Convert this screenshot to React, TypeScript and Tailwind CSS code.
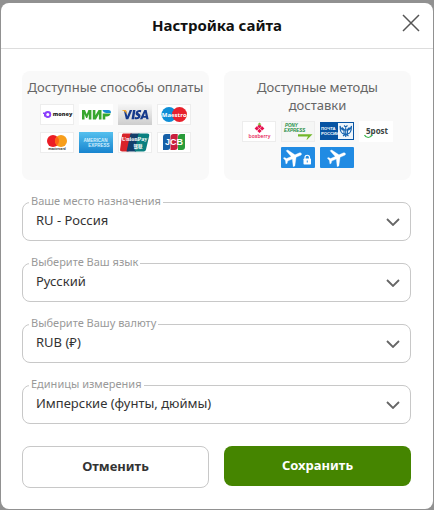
import { useId, useState } from 'react'
import type { ReactElement, ReactNode } from 'react'

interface SelectFieldProps {
  label: string
  options: string[]
}

interface LogoProps {
  title: string
  children: ReactNode
}

/** A 34x21 tile that holds one payment or delivery logo. */
function Logo({ title, children }: LogoProps): ReactElement {
  return (
    <svg role="img" aria-label={title} viewBox="0 0 34 21" className="h-[21px] w-[34px] shrink-0">
      {children}
    </svg>
  )
}

function WhiteTile({ fill = '#fff' }: { fill?: string }): ReactElement {
  return <rect x="0.5" y="0.5" width="33" height="20" fill={fill} stroke="#ededed" />
}

function PlaneShape(): ReactElement {
  return (
    <path
      fill="#fff"
      stroke="#fff"
      strokeWidth="0.3"
      transform="translate(12 10.200) rotate(66) scale(0.92) translate(-11.500 -12)"
      d="M21 16v-2l-8-5V3.500c0-.83-.67-1.500-1.500-1.500S10 2.670 10 3.500V9l-8 5v2l8-2.500V19l-2 1.500V22l3.500-1 3.500 1v-1.500L13 19v-5.500l8 2.500z"
    />
  )
}

function PaymentLogos(): ReactElement {
  return (
    <>
      <Logo title="ЮMoney">
        <WhiteTile />
        <circle cx="7.800" cy="10.500" r="3.400" fill="#8b3ffd" />
        <path d="M3 8.500h2v4H4V10H3z" fill="#8b3ffd" />
        <circle cx="7.800" cy="10.500" r="1.500" fill="#fff" />
        <text x="12.800" y="12.200" fontFamily="Open Sans" fontSize="5.500" fontWeight="800" fill="#222">money</text>
      </Logo>
      <Logo title="МИР">
        <rect width="34" height="21" fill="#fff" />
        <path fill="#37a72e" d="M3 15.500V6h3l1.700 4.200L9.400 6h3v9.500H9.800V10l-1.600 4H7.100l-1.600-4v5.500zM13.800 6h2.600v5.300L19.500 6h3v9.500h-2.600v-5.400l-3 5.400h-3.100zM23.700 9.500h8c-.6 2-2 3-4 3h-1.400v3h-2.600z" />
        <path fill="#168bd0" d="M23.500 6h5.800c2 0 2.900 1.300 2.600 3h-4.400c-2 0-3.500-1.300-4-3z" />
      </Logo>
      <Logo title="Visa">
        <defs>
          <linearGradient id="visa-tile" x2="0" y2="1">
            <stop stopColor="#f6f6f6" />
            <stop offset="1" stopColor="#cdcdcd" />
          </linearGradient>
        </defs>
        <rect width="34" height="21" fill="url(#visa-tile)" />
        <path fill="#163a8c" d="M6 7h2.200l1 5.300L11.700 6h2.600l-4 9.200H7.900zM15 6h2.500l-1.500 9.200h-2.500zM23.300 6.300 22.900 8.400c-1.400-.7-2.900-.5-2.900.2 0 .9 2.900 1.200 2.500 3.600-.4 2.800-3.300 3.600-6 2.700l.4-2.200c1.400.8 3.100.7 3.200-.1.100-.9-2.700-1.100-2.500-3.400.3-2.800 3.300-3.600 5.700-2.900zM26.300 6h2.300l2 9.200h-2.300l-.3-1.500h-2.900l-.7 1.500h-2.500zm.8 2.800-1.300 3.200h1.800z" />
        <path fill="#f2a62c" d="M4 6h3.300c.6 0 .9.3 1 .8l.8 4C8 8.500 6.500 7.100 4 6.300z" />
      </Logo>
      <Logo title="Maestro">
        <WhiteTile />
        <circle cx="12" cy="10.500" r="7.500" fill="#0d8ed6" />
        <circle cx="22.500" cy="10.500" r="7.500" fill="#e8212c" />
        <text x="17.200" y="12.500" textAnchor="middle" fontFamily="Open Sans" fontSize="6" fontWeight="700" fill="#fff">Maestro</text>
      </Logo>
      <Logo title="Mastercard">
        <WhiteTile />
        <circle cx="13" cy="9" r="6" fill="#eb1c24" />
        <circle cx="21" cy="9" r="6" fill="#f79e1b" />
        <path fill="#ff6314" d="M17 4.500a6 6 0 0 1 0 9a6 6 0 0 1 0-9z" />
        <text x="17" y="18" textAnchor="middle" fontFamily="Open Sans" fontSize="3" fontWeight="700" fill="#333">mastercard</text>
      </Logo>
      <Logo title="American Express">
        <defs>
          <linearGradient id="amex-tile" x2="0" y2="1">
            <stop stopColor="#55c0ee" />
            <stop offset="1" stopColor="#1784cf" />
          </linearGradient>
        </defs>
        <rect width="34" height="21" fill="url(#amex-tile)" />
        <text x="16.500" y="9.500" textAnchor="middle" fontFamily="Liberation Sans" fontSize="4.500" fontWeight="700" fill="#d5effc">AMERICAN</text>
        <text x="20" y="14.800" textAnchor="middle" fontFamily="Liberation Sans" fontSize="4.500" fontWeight="700" fill="#d5effc">EXPRESS</text>
      </Logo>
      <Logo title="UnionPay">
        <WhiteTile />
        <path fill="#d8232a" d="M5.500 1.500H14L10.500 19.500H4.200c-1.500 0-2.400-.8-2.100-2.200L4 3c.2-1 .7-1.500 1.500-1.500z" />
        <path fill="#143f6b" d="M12.500 1.500h9l-3.500 18H8.500z" />
        <path fill="#0a8080" d="M20.500 1.500h8.700c1.500 0 2.300.8 2 2.200L28 17.500c-.3 1.300-1.100 2-2.300 2h-9z" />
        <text x="16.500" y="9" textAnchor="middle" fontFamily="Liberation Serif" fontSize="6" fontWeight="700" fill="#fff">UnionPay</text>
        <text x="20" y="15.500" textAnchor="middle" fontFamily="Noto Sans CJK SC" fontSize="4.500" fontWeight="700" fill="#fff">银联</text>
      </Logo>
      <Logo title="JCB">
        <WhiteTile />
        <path fill="#1760a8" d="M9 2h4.200v13c0 2-1 3-3 3H6V5c0-2 1-3 3-3z" />
        <path fill="#c91f3d" d="M16.500 2h4.200v13c0 2-1 3-3 3h-4.200V5c0-2 1-3 3-3z" />
        <path fill="#299b3a" d="M24 2h4v13c0 2-1 3-3 3h-4V5c0-2 1-3 3-3z" />
        <text x="17" y="13" textAnchor="middle" fontFamily="Liberation Sans" fontSize="9" fontWeight="700" fill="#fff">JCB</text>
      </Logo>
    </>
  )
}

function DeliveryLogos(): ReactElement {
  return (
    <>
      <Logo title="Boxberry">
        <WhiteTile />
        <path fill="#e6124f" d="m17.500 3 2.200 2.200-2.200 2.200-2.200-2.200zM14.800 5.200l2.200 2.200-2.200 2.200-2.200-2.200zM20.200 5.200l2.200 2.200-2.200 2.200L18 7.400zM17.500 7.700l2.200 2.200-2.200 2.200-2.200-2.200z" />
        <path fill="#7fb93a" d="m17.500 1.500 2 2h-1l-1 1.200-1-1.200h-1z" />
        <text x="17.500" y="17" textAnchor="middle" fontFamily="Open Sans" fontSize="5" fontWeight="600" fill="#e6124f">boxberry</text>
      </Logo>
      <Logo title="Pony Express">
        <WhiteTile fill="#f5f6f5" />
        <text x="4" y="5.800" fontFamily="Liberation Sans" fontSize="4.500" fontWeight="700" fontStyle="italic" fill="#168a40">PONY</text>
        <text x="3" y="11" fontFamily="Liberation Sans" fontSize="4.500" fontWeight="700" fontStyle="italic" fill="#168a40">EXPRESS</text>
        <path fill="#72b72a" d="M17 13.200h14.500L26 18.800l-.5-.3 1.500-2.900H17z" />
      </Logo>
      <Logo title="Почта России">
        <rect y="1" width="34" height="18" fill="#0754a3" />
        <rect x="18" y="2" width="15" height="16" fill="#eef5fb" />
        <text x="1" y="8.500" fontFamily="Liberation Sans" fontSize="4.200" fontWeight="700" fill="#fff">ПОЧТА</text>
        <text x="1" y="13.500" fontFamily="Liberation Sans" fontSize="4.200" fontWeight="700" fill="#fff">РОССИИ</text>
        <g fill="none" stroke="#1764b0" strokeWidth="1.100">
          <path d="M24.500 9c-3 0-4-2-4.500-4 0 5 1 8 4.500 8M27 9c3 0 4-2 4.500-4 0 5-1 8-4.500 8M22 6.500 24.500 9M29.500 6.500 27 9" />
          <path d="M24 4.500 25.700 6l1.800-1.500M25.700 5v11M23 15l2.700-2 2.800 2M24 9h3.500v4H24z" />
        </g>
      </Logo>
      <Logo title="5post">
        <rect width="34" height="21" fill="#fff" />
        <text x="7" y="13" fontFamily="Open Sans" fontSize="8" fontWeight="700" fill="#3c4442">5post</text>
        <path d="M5.500 14c1.500 3.300 6 3.300 7.500 0" fill="none" stroke="#3ab54a" strokeWidth="1.200" />
      </Logo>
      <Logo title="Защищённая авиадоставка">
        <rect width="34" height="21" rx="1" fill="#218be3" />
        <PlaneShape />
        <rect x="22.500" y="11.500" width="7.500" height="6" rx="0.700" fill="#fff" />
        <path d="M24 12v-1.500c0-3 4.500-3 4.500 0V12" fill="none" stroke="#fff" strokeWidth="1.200" />
        <path d="M26.250 13.500v2" stroke="#218be3" strokeWidth="1" />
      </Logo>
      <Logo title="Авиадоставка">
        <rect width="34" height="21" rx="1" fill="#218be3" />
        <g transform="translate(5 0)">
          <PlaneShape />
        </g>
      </Logo>
    </>
  )
}

function SelectField({ label, options }: SelectFieldProps): ReactElement {
  const id = useId()
  const [value, setValue] = useState(options[0])

  return (
    <div className="relative">
      <label htmlFor={id} className="absolute -top-2 left-[7px] bg-white px-0.5 text-[11px] leading-[14px] text-[#999]">
        {label}
      </label>
      <select
        id={id}
        value={value}
        onChange={(e) => { setValue(e.target.value) }}
        className="block h-[39px] w-full appearance-none rounded-lg border border-[#c8c8c8] bg-white pr-10 pb-0.5 pl-[13px] text-[13px] text-[#333] focus-visible:outline-2 focus-visible:outline-[#458500]"
      >
        {options.map((option) => <option key={option}>{option}</option>)}
      </select>
      <svg aria-hidden="true" viewBox="0 0 14 8" className="pointer-events-none absolute top-4 right-[11px] h-2 w-3.5">
        <path d="m1 1 6 6 6-6" fill="none" stroke="#666" strokeWidth="1.800" />
      </svg>
    </div>
  )
}

export default function App(): ReactElement {
  return (
    <div className="min-h-screen bg-[#919191] px-px pt-[3px] pb-px font-['Noto_Sans','Open_Sans',sans-serif]">
      <div role="dialog" aria-labelledby="settings-title" className="rounded-lg bg-white">
        <header className="grid h-[46px] grid-cols-[1fr_auto_1fr] items-center border-b border-[#ddd] pr-3 pl-3">
          <h1 id="settings-title" className="col-start-2 pb-0.5 text-[15px] leading-5 font-bold text-[#111]">Настройка сайта</h1>
          <button type="button" aria-label="Закрыть" className="mb-1.5 cursor-pointer justify-self-end">
            <svg aria-hidden="true" viewBox="0 0 20 18" className="h-[18px] w-5">
              <path d="m2 1 16 16M18 1 2 17" fill="none" stroke="#555" strokeWidth="1.500" />
            </svg>
          </button>
        </header>

        <form onSubmit={(e) => { e.preventDefault() }} className="flex flex-col gap-[22px] pt-[22px] pr-[22px] pb-[21px] pl-[21px]">
          <div className="grid grid-cols-2 gap-[15px]">
            <section className="min-h-[109px] rounded-lg bg-[#f9f9f9] pt-[7px] text-center">
              <h2 className="text-[13px] leading-[18px] text-[#666]">Доступные способы оплаты</h2>
              <div className="mx-auto mt-2 flex max-w-[160px] flex-wrap justify-center gap-x-[5px] gap-y-[7px]">
                <PaymentLogos />
              </div>
            </section>
            <section className="min-h-[109px] rounded-lg bg-[#f9f9f9] pt-[7px] text-center">
              <h2 className="px-5 text-[13px] leading-[18px] text-[#666]">Доступные методы доставки</h2>
              <div className="mx-auto mt-[7px] flex max-w-[160px] flex-wrap justify-center gap-[5px]">
                <DeliveryLogos />
              </div>
            </section>
          </div>

          <SelectField label="Ваше место назначения" options={['RU - Россия', 'KZ - Казахстан', 'US - США']} />
          <SelectField label="Выберите Ваш язык" options={['Русский', 'English']} />
          <SelectField label="Выберите Вашу валюту" options={['RUB (₽)', 'USD ($)', 'EUR (€)']} />
          <SelectField label="Единицы измерения" options={['Имперские (фунты, дюймы)', 'Метрические (кг, см)']} />

          <div className="grid grid-cols-2 items-start gap-[15px]">
            <button type="button" className="h-[42px] cursor-pointer rounded-lg border border-[#c8c8c8] bg-white text-[13px] font-bold text-[#333]">
              Отменить
            </button>
            <button type="submit" className="h-10 cursor-pointer rounded-lg bg-[#458500] text-[13px] font-bold text-white">
              Сохранить
            </button>
          </div>
        </form>
      </div>
    </div>
  )
}
